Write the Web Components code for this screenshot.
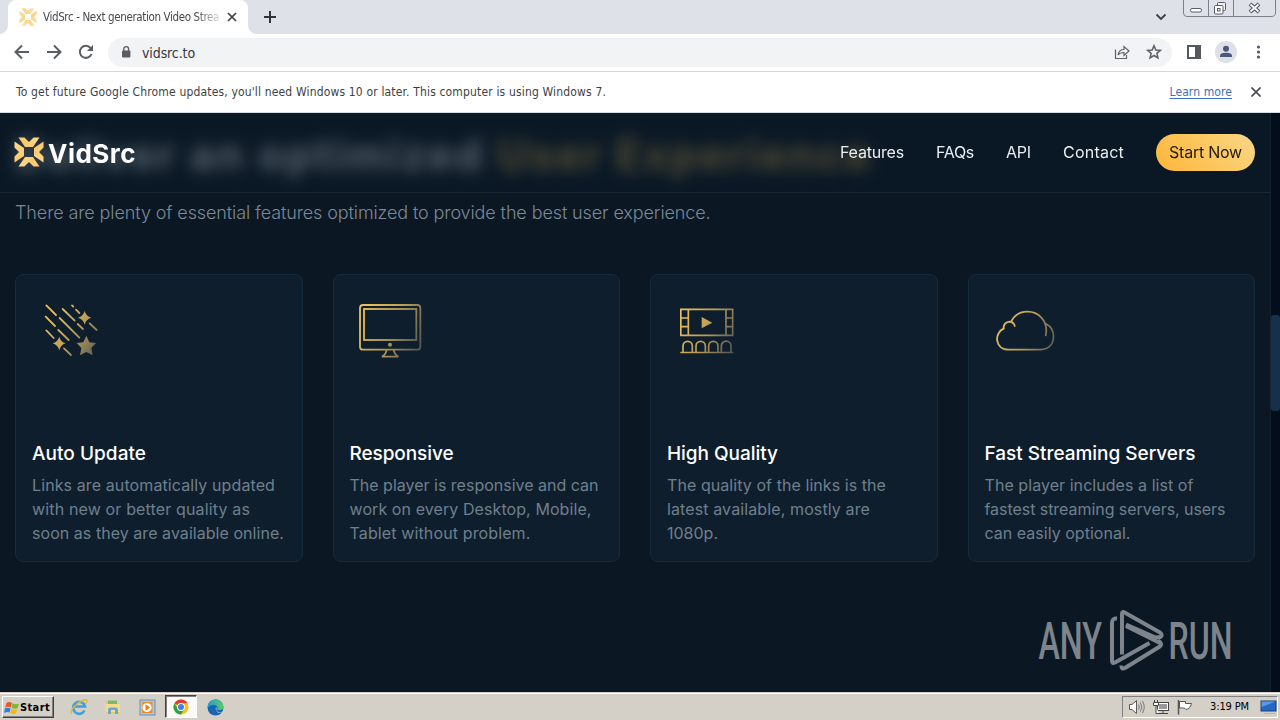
<!DOCTYPE html>
<html lang="en">
<head>
  <meta charset="utf-8">
  <title>VidSrc - Next generation Video Streaming</title>
  <style>
    html, body { margin: 0; padding: 0; height: 100%; overflow: hidden; }
    body { font-family: "DejaVu Sans Condensed", "DejaVu Sans", sans-serif; font-stretch: condensed; }
  </style>
</head>
<body>

<desktop-screen>
  <browser-tabs slot="browser"></browser-tabs>
  <browser-toolbar slot="browser"></browser-toolbar>
  <info-bar slot="browser"></info-bar>
  <site-page slot="page">
    <feature-card icon="stars" heading="Auto Update" measure="114">
      <fit-text measure="243">Links are automatically updated</fit-text><br>
      <fit-text measure="218">with new or better quality as</fit-text><br>
      <fit-text measure="252">soon as they are available online.</fit-text>
    </feature-card>
    <feature-card icon="monitor" heading="Responsive" measure="104">
      <fit-text measure="249">The player is responsive and can</fit-text><br>
      <fit-text measure="242">work on every Desktop, Mobile,</fit-text><br>
      <fit-text measure="181">Tablet without problem.</fit-text>
    </feature-card>
    <feature-card icon="film" heading="High Quality" measure="111">
      <fit-text measure="219">The quality of the links is the</fit-text><br>
      <fit-text measure="203">latest available, mostly are</fit-text><br>
      <fit-text measure="51">1080p.</fit-text>
    </feature-card>
    <feature-card icon="cloud" heading="Fast Streaming Servers" measure="211">
      <fit-text measure="209">The player includes a list of</fit-text><br>
      <fit-text measure="241">fastest streaming servers, users</fit-text><br>
      <fit-text measure="146">can easily optional.</fit-text>
    </feature-card>
  </site-page>
  <task-bar slot="taskbar"></task-bar>
</desktop-screen>

<script>

  // VIDSRC MARK, DRAWN IN A 30x30 BOX //
  const VIDSRC_MARK = `
    <defs>
      <linearGradient id="mark" gradientUnits="userSpaceOnUse" x1="0" y1="26" x2="30" y2="4">
        <stop offset="0" stop-color="#fbb63f"/><stop offset="1" stop-color="#fbdc96"/>
      </linearGradient>
    </defs>
    <g fill="url(#mark)">
      <path d="M4.500 0.500H10.400L15 5L19.600 0.500H25.500L19 10H11Z"/>
      <path d="M4.500 0.500H10.400L15 5L19.600 0.500H25.500L19 10H11Z" transform="rotate(90 15 15)"/>
      <path d="M4.500 0.500H10.400L15 5L19.600 0.500H25.500L19 10H11Z" transform="rotate(180 15 15)"/>
      <path d="M4.500 0.500H10.400L15 5L19.600 0.500H25.500L19 10H11Z" transform="rotate(270 15 15)"/>
    </g>`;

  // FEATURE ICONS //
  const FEATURE_ICONS = {
    stars: {
      viewBox: '66 78 300 240',
      gradient: [125, 150, 275, 265],
      markup: `
        <g fill="none" stroke="url(#gold)" stroke-width="5.4" stroke-linecap="round">
          <path d="M109 121L138 150M158 132L194 167M186 121L190 125M198 134L208 144M107 155L135 183M149 159L208 218M203 177L219 192M239 175L260 195M109 196L131 219M145 195L176 225M162 250L183 270"/>
        </g>
        <g fill="url(#gold)">
          <path d="M224 138Q228 154 244 158Q228 163 224 179Q220 163 204 158Q220 154 224 138Z"/>
          <path d="M148 215Q152 231 167 235Q152 240 148 256Q143 240 128 235Q143 231 148 215Z"/>
          <path d="M229 212L238 232L258 234L244 249L248 271L229 261L210 271L214 249L200 234L220 232Z"/>
        </g>`
    },
    monitor: {
      viewBox: '60 78 300 240',
      gradient: [100, 150, 275, 240],
      markup: `
        <g fill="none" stroke="url(#gold)" stroke-width="5.4">
          <rect x="90" y="120" width="181" height="134" rx="9"/>
          <rect x="102" y="132" width="157" height="93"/>
          <path d="M170 254Q168 269 156 275H205Q193 269 191 254"/>
        </g>
        <circle cx="180" cy="239" r="6" fill="url(#gold)"/>`
    },
    film: {
      viewBox: '81 78 300 240',
      gradient: [120, 165, 285, 245],
      markup: `
        <g fill="none" stroke="url(#gold)" stroke-width="5">
          <path d="M122.500 133H278V211H122.500ZM145 133V211M258 133V211M122 159H145M122 185H145M258 159H278M258 185H278"/>
          <path d="M121 262.500H280M129 262V243A14 14 0 0 1 157 243V262M168 262V243A14 14 0 0 1 196 243V262M206 262V243A14 14 0 0 1 234 243V262M244 262V243A14 14 0 0 1 273 243V262"/>
        </g>
        <path d="M185 156L217 173L185 190Z" fill="url(#gold)"/>`
    },
    cloud: {
      viewBox: '73.5 78 300 240',
      gradient: [110, 180, 285, 250],
      markup: `
        <g fill="none" stroke="url(#gold)" stroke-width="5.4" stroke-linecap="round">
          <path d="M129 191C100 204 103 254 145 254H240C266 253 279 237 279 214C279 195 269 183 257 177"/>
          <path d="M129 191C129 169 156 162 163 183"/>
          <path d="M152 169C164 147 183 140 201 140C232 140 264 165 256 211"/>
        </g>`
    }
  };

  /**
   *
   * ShadowElement
   *  - Description: base class, fills an open shadow root from the render() markup
   *
   */
  class ShadowElement extends HTMLElement {

    constructor() {
      super();
      this.attachShadow({mode: 'open'});
    }

    /**
     * WEB COMPONENT CONNECTED
     */
    connectedCallback() {
      this.shadowRoot.innerHTML = this.render();
    }

  }

  /**
   *
   * DesktopScreen
   *  - Element: desktop-screen
   *
   */
  class DesktopScreen extends ShadowElement {

    render() {
      return `
        <style>
          :host { display: flex; flex-direction: column; width: 1280px; height: 720px; overflow: hidden; }
          .browser { flex: none; }
          .page { flex: 1; min-height: 0; }
        </style>
        <div class="browser"><slot name="browser"></slot></div>
        <div class="page"><slot name="page"></slot></div>
        <slot name="taskbar"></slot>`;
    }

  }

  /**
   *
   * BrowserTabs
   *  - Element: browser-tabs
   *
   */
  class BrowserTabs extends ShadowElement {

    render() {
      return `
        <style>
          :host { display: flex; height: 34px; background: #dee1e8; box-sizing: border-box; padding-left: 8px; }
          svg { display: block; flex: none; }
          .tab {
            position: relative; display: flex; align-items: center; box-sizing: border-box;
            width: 240px; padding-left: 11px; background: #fff; border-radius: 8px 8px 0 0;
          }
          .tab::before, .tab::after {
            content: ""; position: absolute; bottom: 0; width: 8px; height: 8px;
          }
          .tab::before { left: -8px; background: radial-gradient(circle at 0 0, transparent 7.5px, #fff 8px); }
          .tab::after { right: -8px; background: radial-gradient(circle at 100% 0, transparent 7.5px, #fff 8px); }
          .title {
            flex: none; width: 178px; margin: 0 6px 0 6px; overflow: hidden; white-space: nowrap;
            font-size: 11.5px; line-height: 16px; color: #45484d;
            -webkit-mask-image: linear-gradient(90deg, #000 152px, transparent 182px);
            mask-image: linear-gradient(90deg, #000 152px, transparent 182px);
          }
          .plus { margin: 10px 0 0 15px; }
          .caret { margin: 13px 16px 0 auto; }
          .window { margin-right: 4px; }
        </style>
        <div class="tab">
          <svg width="18" height="18" viewBox="0 0 30 30" opacity=".8">${ VIDSRC_MARK }</svg>
          <div class="title"><fit-text measure="176">VidSrc - Next generation Video Strea</fit-text></div>
          <svg width="10" height="10" viewBox="0 0 10 10" stroke="#3c4043" stroke-width="1.7"><path d="M1 1L9 9M9 1L1 9"/></svg>
        </div>
        <svg class="plus" width="14" height="14" viewBox="0 0 14 14" stroke="#30343c" stroke-width="2"><path d="M7 1V13M1 7H13"/></svg>
        <svg class="caret" width="12" height="8" viewBox="0 0 12 8" fill="none" stroke="#3c4043" stroke-width="1.8"><path d="M1.500 1.500L6 6L10.500 1.500"/></svg>
        <svg class="window" width="93" height="18" viewBox="0 0 93 18" fill="none" stroke="#7c8088">
          <path d="M0.500 0V13Q0.500 16.500 4 16.500H88Q92.500 16.500 92.500 13V0M25.500 0V16M50.500 0V16" />
          <rect x="7.500" y="8.500" width="11" height="3.500" rx="1.500" fill="#fff" stroke="#5b5f68"/>
          <g stroke="#565a64"><rect x="34.500" y="2.500" width="8" height="8" rx="1" fill="#eef0f4"/><rect x="31.500" y="5.500" width="8.500" height="8.500" rx="1" fill="#fff"/><rect x="34.500" y="8.500" width="2.500" height="2.500"/></g>
          <path d="M67 4L76 12M76 4L67 12" stroke="#565a64" stroke-width="4.200"/><path d="M67.500 4.500L75.500 11.500M75.500 4.500L67.500 11.500" stroke="#f4f5f8" stroke-width="2"/>
        </svg>`;
    }

  }

  /**
   *
   * BrowserToolbar
   *  - Element: browser-toolbar
   *
   */
  class BrowserToolbar extends ShadowElement {

    render() {
      return `
        <style>
          :host {
            display: flex; align-items: center; box-sizing: border-box; height: 38px; padding: 0 12px 1px;
            background: #fff; border-bottom: 1px solid #d4d6d9;
          }
          svg { display: block; flex: none; }
          .nav { display: flex; gap: 12px; width: 96px; }
          .omnibox {
            display: flex; align-items: center; flex: 1; box-sizing: border-box; height: 29px;
            padding: 0 9px 0 11px; border-radius: 15px; background: #f1f3f4;
          }
          .address { flex: 1; margin: 1px 0 0 9px; font-size: 14px; line-height: 20px; color: #36383c; }
          .tools { display: flex; gap: 12px; margin-left: 12px; }
        </style>
        <div class="nav">
          <svg width="20" height="20" viewBox="0 0 20 20" fill="none" stroke="#5a5d61" stroke-width="2"><path d="M17 10H4M10 3.500L3.500 10L10 16.500"/></svg>
          <svg width="20" height="20" viewBox="0 0 20 20" fill="none" stroke="#5a5d61" stroke-width="2"><path d="M3 10H16M10 3.500L16.500 10L10 16.500"/></svg>
          <svg width="20" height="20" viewBox="0 0 20 20" fill="none" stroke="#5a5d61" stroke-width="2"><path d="M15.500 12A6 6 0 1 1 14.500 6"/><path d="M17 3V9H11Z" fill="#5a5d61" stroke="none"/></svg>
        </div>
        <div class="omnibox">
          <svg width="14" height="14" viewBox="0 0 14 14"><rect x="3" y="5.500" width="8.400" height="7" rx="1" fill="#5a5d61"/><path d="M4.800 6V4A2.400 2.400 0 0 1 9.600 4V6" fill="none" stroke="#5a5d61" stroke-width="1.400"/></svg>
          <div class="address"><fit-text measure="53">vidsrc.to</fit-text></div>
          <svg width="18" height="18" viewBox="0 0 18 18" fill="none" stroke="#5f6368" stroke-width="1.200"><path d="M2.500 6.500V15.500H13.500V12"/><path d="M5 12Q6 6.500 11 6.500V3.500L16 8L11 12.500V9.500Q7 9.500 5 12Z"/></svg>
          <svg width="18" height="18" viewBox="0 0 18 18" style="margin-left:14px" fill="none" stroke="#5f6368" stroke-width="1.600"><path d="M9 2.800L10.800 7L15.300 7.400L11.900 10.400L12.900 14.900L9 12.500L5.100 14.900L6.100 10.400L2.700 7.400L7.200 7Z"/></svg>
        </div>
        <div class="tools">
          <svg width="20" height="20" viewBox="0 0 20 20"><rect x="4" y="4" width="12" height="12" fill="none" stroke="#55585d" stroke-width="2"/><rect x="11" y="4" width="5" height="12" fill="#55585d"/></svg>
          <svg width="22" height="22" viewBox="0 0 22 22" style="margin:-1px"><circle cx="11" cy="11" r="11" fill="#dde0e6"/><circle cx="11" cy="7.800" r="3" fill="#4a5878"/><path d="M5 16V15Q5 11.700 11 11.700T17 15V16Z" fill="#4a5878"/></svg>
          <svg width="20" height="20" viewBox="0 0 20 20" fill="#55585d"><circle cx="10.500" cy="5" r="1.600"/><circle cx="10.500" cy="10" r="1.600"/><circle cx="10.500" cy="15" r="1.600"/></svg>
        </div>`;
    }

  }

  /**
   *
   * InfoBar
   *  - Element: info-bar
   *
   */
  class InfoBar extends ShadowElement {

    render() {
      return `
        <style>
          :host {
            display: flex; align-items: center; box-sizing: border-box; height: 41px; padding: 0 19px 1px 16px;
            background: #fff; border-bottom: 1px solid #d5dde0; font-size: 12px; line-height: 18px; color: #3d3f43;
          }
          .link { margin-left: auto; color: #3a70bd; text-decoration: underline; text-underline-offset: 2px; }
          svg { margin: 1px 0 0 19px; }
        </style>
        <fit-text measure="590">To get future Google Chrome updates, you'll need Windows 10 or later. This computer is using Windows 7.</fit-text>
        <fit-text class="link" measure="62.500">Learn more</fit-text>
        <svg width="10" height="10" viewBox="0 0 10 10" stroke="#4c4f54" stroke-width="1.700"><path d="M.5.5L9.500 9.500M9.500.5L.5 9.500"/></svg>`;
    }

  }

  /**
   *
   * SiteHeader
   *  - Element: site-header
   *
   */
  class SiteHeader extends ShadowElement {

    render() {
      return `
        <style>
          :host {
            display: flex; align-items: center; box-sizing: border-box; height: 80px; padding: 0 15px 1px 14px;
            background: rgba(10, 26, 39, .66); border-bottom: 1px solid #1b2833;
            -webkit-backdrop-filter: blur(7.5px); backdrop-filter: blur(7.5px);
            color: #e9eef3; font-size: 16px; line-height: 24px;
          }
          .brand { margin: 3px 0 0 4px; font-size: 26px; font-weight: 700; line-height: 32px; color: #fff; }
          nav { display: flex; gap: 32px; margin-left: auto; }
          .start {
            display: flex; align-items: center; justify-content: center; box-sizing: border-box; width: 99px; height: 37px; margin-left: 32px;
            padding-bottom: 1px; border-radius: 19px; color: #20180a;
            background: linear-gradient(50deg, #fdb83d 5%, #fbcd6c 70%, #f8d68c);
          }
        </style>
        <svg width="30" height="30" viewBox="0 0 30 30">${ VIDSRC_MARK }</svg>
        <div class="brand"><fit-text measure="88">VidSrc</fit-text></div>
        <nav>
          <fit-text measure="64">Features</fit-text>
          <fit-text measure="38">FAQs</fit-text>
          <fit-text measure="25">API</fit-text>
          <fit-text measure="61">Contact</fit-text>
        </nav>
        <div class="start"><fit-text measure="73">Start Now</fit-text></div>`;
    }

  }

  /**
   *
   * FeatureCard
   *  - Element: feature-card
   *
   */
  class FeatureCard extends ShadowElement {

    render() {
      const {viewBox, gradient: [x1, y1, x2, y2], markup} = FEATURE_ICONS[this.getAttribute('icon')];
      return `
        <style>
          :host {
            display: block; box-sizing: border-box; height: 288px; padding: 16px;
            background: #0e1e2d; border: 1px solid #152b3e; border-radius: 8px;
          }
          svg { display: block; margin-bottom: 69px; }
          h3 { margin: 0 0 5px; font-size: 19px; font-weight: 500; line-height: 28px; color: #fff; }
          p { margin: 0; font-size: 16px; line-height: 24px; color: #6f808c; white-space: nowrap; }
        </style>
        <svg width="100" height="80" viewBox="${ viewBox }">
          <defs>
            <linearGradient id="gold" gradientUnits="userSpaceOnUse" x1="${ x1 }" y1="${ y1 }" x2="${ x2 }" y2="${ y2 }">
              <stop offset="0" stop-color="#e9bf5d"/><stop offset=".5" stop-color="#b99a54"/><stop offset="1" stop-color="#50585a"/>
            </linearGradient>
          </defs>
          ${ markup }
        </svg>
        <h3><fit-text measure="${ this.getAttribute('measure') }">${ this.getAttribute('heading') }</fit-text></h3>
        <p><slot></slot></p>`;
    }

  }

  /**
   *
   * AnyRunMark
   *  - Element: anyrun-mark
   *
   */
  class AnyRunMark extends ShadowElement {

    render() {
      return `
        <style>
          :host { display: block; width: 210px; height: 70px; }
          text { font-family: Roboto, sans-serif; font-size: 51.5px; font-weight: 500; fill: #7d848c; }
        </style>
        <svg width="210" height="70" viewBox="1035 605 210 70">
          <text x="1038.500" y="659.300" textLength="63.500" lengthAdjust="spacingAndGlyphs">ANY</text>
          <text x="1168.500" y="659.300" textLength="64" lengthAdjust="spacingAndGlyphs">RUN</text>
          <g fill="none" stroke="#7d848c" stroke-width="4" stroke-linejoin="round">
            <path d="M1117 618.500Q1112 618 1112 623V661Q1112 664 1115 662.500L1149.500 643"/>
            <path d="M1122 654.500V614Q1122 611 1125 612.700L1160 632.500Q1163 635 1160.500 637L1155.500 637.500L1126 624.500"/>
            <path d="M1158 640.500Q1163.500 644 1159 647L1125 668Q1121 670 1121.500 665.500"/>
            <path d="M1126 626L1160 643"/>
          </g>
        </svg>`;
    }

  }

  /**
   *
   * SitePage
   *  - Element: site-page
   *
   */
  class SitePage extends ShadowElement {

    render() {
      return `
        <style>
          :host {
            position: relative; display: flex; height: 579px; overflow: hidden;
            background: #0b1723; font-family: Inter, sans-serif; font-stretch: normal;
          }
          site-header { position: absolute; inset: 0 10px auto 0; }
          anyrun-mark { position: absolute; left: 1035px; bottom: 17px; }
          main { flex: 1; box-sizing: border-box; padding: 14px 15px 0; }
          h2 { margin: 0; height: 56px; font-size: 42px; font-weight: 700; line-height: 56px; color: #e6e9ee; white-space: nowrap; }
          h2 span { color: #e0ae4c; }
          .lead { margin: 17px 0 48px; font-size: 18px; font-weight: 300; line-height: 26px; color: #7c8a96; }
          .cards { display: grid; grid-template-columns: repeat(4, 1fr); gap: 30px; }
          .scrollbar { width: 10px; box-sizing: border-box; padding-top: 202px; background: #030d1b; border-left: 1px solid #14212e; }
          .thumb { height: 96px; background: #17304a; border-radius: 3px; }
        </style>
        <main>
          <h2><fit-text measure="857">Deliver an optimized <span>User Experience</span></fit-text></h2>
          <div class="lead"><fit-text measure="695.500">There are plenty of essential features optimized to provide the best user experience.</fit-text></div>
          <div class="cards"><slot></slot></div>
        </main>
        <div class="scrollbar"><div class="thumb"></div></div>
        <site-header></site-header>
        <anyrun-mark></anyrun-mark>`;
    }

  }

  /**
   *
   * TaskBar
   *  - Element: task-bar
   *
   */
  class TaskBar extends ShadowElement {

    render() {
      return `
        <style>
          :host {
            display: flex; align-items: flex-start; flex: none; box-sizing: border-box; height: 28px; padding: 2px 2px 0;
            background: #d4d0c8; border-top: 1px solid #d4d0c8; box-shadow: inset 0 1px #fff; font-size: 11px; line-height: 14px; color: #000;
          }
          svg { display: block; flex: none; }
          .start {
            display: flex; align-items: center; box-sizing: border-box; width: 52px; height: 22px; margin: 1px 8px 0 0; padding: 1px 0 0 1px; gap: 0;
            border: 1px solid; border-color: #fff #404040 #404040 #fff; box-shadow: inset -1px -1px #808080; font-weight: 700;
          }
          .slot { display: flex; align-items: center; justify-content: center; box-sizing: border-box; width: 34px; height: 24px; }
          .slot.active { margin: 0 1px; width: 32px; height: 23px; border: 1px solid; border-color: #404040 #fff #fff #404040; box-shadow: inset 1px 1px #808080; background: #fbfaf8; }
          .tray {
            display: flex; align-items: center; box-sizing: border-box; width: 156px; height: 22px; margin: 1px 0 0 auto; padding: 0 1px 0 5px;
            border: 1px solid; border-color: #808080 #fff #fff #808080;
          }
          .tray svg { margin-right: 6px; }
          .clock { margin: 0 11px 0 10px; }
          .tray .desk { margin: 0; }
        </style>
        <div class="start">
          <svg width="16" height="16" viewBox="0 0 16 16">
            <path d="M2.500 3Q5 1 8 3L6.800 7.500Q4 6 1.200 7.500Z" fill="#e65a23"/><path d="M8.700 3.300Q12 5 15 3.500L13.700 8Q11 9.500 7.500 7.800Z" fill="#7cb82f"/>
            <path d="M1 8.300Q4 7 6.600 8.400L5.400 12.500Q3 11.500 0 13Z" fill="#2f7fd3"/><path d="M7.300 8.700Q10 10.300 13.500 9L12 13.500Q9 15 6.100 13Z" fill="#f7b719"/>
          </svg>
          <fit-text measure="30">Start</fit-text>
        </div>
        <div class="slot">
          <svg width="18" height="18" viewBox="0 0 18 18" fill="none"><path d="M14.500 12.500A6 6 0 1 1 15 8.500H5" stroke="#3ba2df" stroke-width="2.700"/><path d="M2 16Q-1 13 6 7T16.500 1.800Q18 3 15.500 6" stroke="#e8b830" stroke-width="1.400"/></svg>
        </div>
        <div class="slot">
          <svg width="18" height="18" viewBox="0 0 18 18"><path d="M2 3H8L9 5H15V15H2Z" fill="#e9c765"/><path d="M4 2.500H13V7H4Z" fill="#7db968"/><path d="M1.500 6H16V14H1.500Z" fill="#f4dc8c"/><path d="M4 16V11Q4 9.500 6 9.500H12Q14 9.500 14 11V16H11V12H7V16Z" fill="#6aa9d6"/></svg>
        </div>
        <div class="slot">
          <svg width="17" height="17" viewBox="0 0 17 17"><rect x="1" y="1" width="15" height="15" fill="#a8c8e6" stroke="#5f93c5"/><rect x="3" y="3" width="10.500" height="11" fill="#f58a1f"/><circle cx="8" cy="8.500" r="4.600" fill="#fff"/><path d="M6.500 5.300L11.200 8.500L6.500 11.700Z" fill="#ef7912"/></svg>
        </div>
        <div class="slot active">
          <svg width="16" height="16" viewBox="0 0 16 16"><circle cx="8" cy="8" r="7.500" fill="#fbc116"/><path d="M8 8L1.500 4.250A7.500 7.500 0 0 1 14.500 4.250H8Z" fill="#e33b2e"/><path d="M1.500 4.250A7.500 7.500 0 0 0 8 15.500L11.200 9.900H4.750Z" fill="#2da24c"/><circle cx="8" cy="8" r="3.900" fill="#fff"/><circle cx="8" cy="8" r="3" fill="#3f7fe8"/></svg>
        </div>
        <div class="slot">
          <svg width="17" height="17" viewBox="0 0 17 17"><defs><linearGradient id="edge" x1="0" y1="0" x2="1" y2="0"><stop offset="0" stop-color="#249bd8"/><stop offset="1" stop-color="#58cb62"/></linearGradient></defs><circle cx="8.500" cy="8.500" r="8" fill="#1766b5"/><path d="M.5 8.500A8 8 0 0 1 16.500 8Q16.500 11 13 11H10Q12 7 8 6T.5 8.500Z" fill="url(#edge)"/><path d="M10 8Q8 12 11.500 13T16.500 11.500V13Q14.500 14 12 13.800T8.500 9.500Z" fill="#d4d0c8"/></svg>
        </div>
        <div class="tray">
          <svg width="18" height="16" viewBox="0 0 18 16"><path d="M1.500 5.500H4L8.500 1.500V14.500L4 10.500H1.500Z" fill="#fff" stroke="#5b5b5b"/><path d="M10.500 5.500Q12 8 10.500 10.500M12.500 3.500Q15 8 12.500 12.500M14.500 2Q18 8 14.500 14" fill="none" stroke="#777"/></svg>
          <svg width="18" height="16" viewBox="0 0 18 16"><rect x="5.500" y="3.500" width="11" height="8" fill="#999" stroke="#444"/><rect x="6.500" y="4.500" width="9" height="6" fill="none" stroke="#fff"/><path d="M7 14.500H16M11 12V14" stroke="#444"/><path d="M2.500 1V3M5.500 1V3M1.500 3.500H6.500V6.500H1.500ZM4 7V14.500H7" fill="#fff" stroke="#444"/></svg>
          <svg width="18" height="16" viewBox="0 0 18 16"><path d="M2.500 1V15.500" stroke="#555" stroke-width="1.500"/><path d="M3.500 2.500H9.500V4.500H15.500Q14 10 10 10.500Q9 8.500 3.500 9Z" fill="#fff" stroke="#555"/></svg>
          <div class="clock"><fit-text measure="39">3:19 PM</fit-text></div>
          <svg class="desk" width="17" height="16" viewBox="0 0 17 16"><rect x="1" y="2" width="15" height="10" fill="#2468c4" stroke="#16407c"/><path d="M1.500 2.500H15.500L1.500 8Z" fill="#5b9ae0"/><path d="M4 14.500H15" stroke="#9db7d4"/></svg>
        </div>`;
    }

  }

  /**
   *
   * FitText
   *  - Element: fit-text
   *  - Description: single line of text, tracked to the width in its measure attribute
   *
   */
  class FitText extends ShadowElement {

    connectedCallback() {
      super.connectedCallback();

      // SPREAD THE DIFFERENCE OVER THE CHARACTERS //
      const measure = Number(this.getAttribute('measure'));
      const {width} = this.getBoundingClientRect();
      const tracking = (measure - width) / this.textContent.length;
      this.style.letterSpacing = `${ tracking.toFixed(3) }px`;
    }

    render() {
      return `
        <style>
          :host { display: inline-block; white-space: nowrap; }
        </style>
        <slot></slot>`;
    }

  }

  customElements.define('desktop-screen', DesktopScreen);
  customElements.define('browser-tabs', BrowserTabs);
  customElements.define('browser-toolbar', BrowserToolbar);
  customElements.define('info-bar', InfoBar);
  customElements.define('site-header', SiteHeader);
  customElements.define('anyrun-mark', AnyRunMark);
  customElements.define('feature-card', FeatureCard);
  customElements.define('site-page', SitePage);
  customElements.define('task-bar', TaskBar);

  // DEFINED LAST, THE SURROUNDING FONTS HAVE TO BE IN PLACE BEFORE IT MEASURES //
  customElements.define('fit-text', FitText);

</script>
</body>
</html>
